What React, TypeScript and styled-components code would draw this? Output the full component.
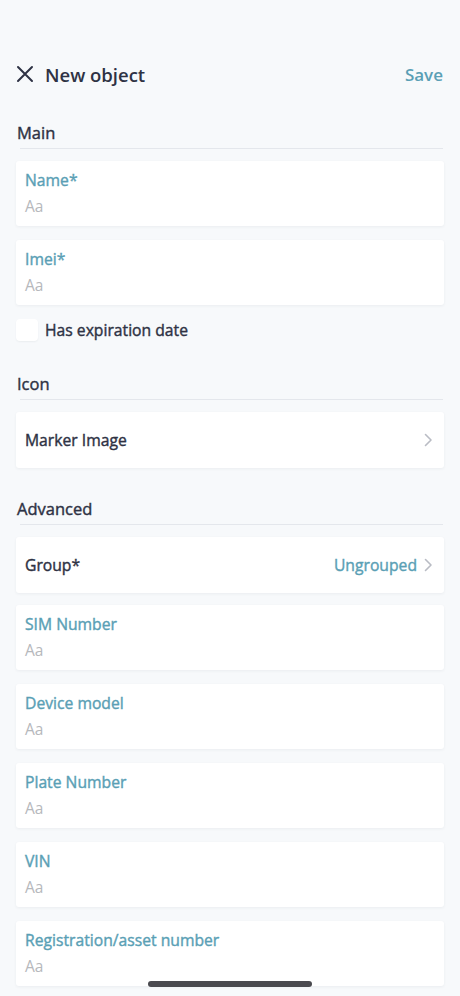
import React from "react";
import styled, { createGlobalStyle, css } from "styled-components";

const GlobalStyle = createGlobalStyle`
  html, body {
    margin: 0;
    padding: 0;
    background: #f7f9fb;
  }
  body {
    font-family: "Open Sans", "Noto Sans", sans-serif;
    -webkit-font-smoothing: antialiased;
  }
`;

const teal = "#5a9fb5";
const ink = "#2e3244";

// Open Sans has no medium face installed, so thicken the regular one a bit
const medium = css`
  font-weight: 400;
  -webkit-text-stroke: 0.4px currentColor;
`;

type Field = { label: string; required?: boolean };

const mainFields: Field[] = [
  { label: "Name", required: true },
  { label: "Imei", required: true },
];

const advancedFields: Field[] = [
  { label: "SIM Number" },
  { label: "Device model" },
  { label: "Plate Number" },
  { label: "VIN" },
  { label: "Registration/asset number" },
];

function Chevron() {
  return (
    <svg width="10" height="16" viewBox="0 0 10 16" fill="none">
      <path
        d="M2.5 2.5L8 8L2.5 13.5"
        stroke="#b9bcc4"
        strokeWidth="1.6"
        strokeLinecap="round"
        strokeLinejoin="round"
      />
    </svg>
  );
}

function CloseIcon() {
  return (
    <svg width="18" height="18" viewBox="0 0 18 18" fill="none">
      <path
        d="M2 2L16 16M16 2L2 16"
        stroke={ink}
        strokeWidth="2"
        strokeLinecap="round"
      />
    </svg>
  );
}

function InputCard({ label, required }: Field) {
  return (
    <Card>
      <FieldLabel>
        {label}
        {required ? "*" : ""}
      </FieldLabel>
      <Placeholder>Aa</Placeholder>
    </Card>
  );
}

export default function App() {
  return (
    <>
      <GlobalStyle />
      <Screen>
        <StatusSpace />
        <Header>
          <HeaderLeft>
            <CloseIcon />
            <Title>New object</Title>
          </HeaderLeft>
          <SaveButton>Save</SaveButton>
        </Header>

        <Section $top={18}>
          <SectionTitle>Main</SectionTitle>
          <Divider />
          <Stack>
            {mainFields.map((f) => (
              <InputCard key={f.label} {...f} />
            ))}
          </Stack>
          <CheckRow>
            <CheckBox />
            <CheckLabel>Has expiration date</CheckLabel>
          </CheckRow>
        </Section>

        <Section $top={32}>
          <SectionTitle>Icon</SectionTitle>
          <Divider />
          <RowCard>
            <RowLabel>Marker Image</RowLabel>
            <RowRight>
              <Chevron />
            </RowRight>
          </RowCard>
        </Section>

        <Section $top={30}>
          <SectionTitle>Advanced</SectionTitle>
          <Divider />
          <RowCard $spaced>
            <RowLabel>Group*</RowLabel>
            <RowRight>
              <RowValue>Ungrouped</RowValue>
              <Chevron />
            </RowRight>
          </RowCard>
          <Stack>
            {advancedFields.map((f) => (
              <InputCard key={f.label} {...f} />
            ))}
          </Stack>
        </Section>

        <HomeIndicator />
      </Screen>
    </>
  );
}

const Screen = styled.div`
  position: relative;
  width: 460px;
  height: 996px;
  overflow: hidden;
  padding: 0 16px;
  box-sizing: border-box;
  background: #f7f9fb;
`;

const StatusSpace = styled.div`
  height: 44px;
`;

const Header = styled.div`
  display: flex;
  align-items: center;
  justify-content: space-between;
  height: 60px;
`;

const HeaderLeft = styled.div`
  display: flex;
  align-items: center;
  gap: 11px;
`;

const Title = styled.div`
  font-size: 18.5px;
  font-weight: 600;
  color: ${ink};
`;

const SaveButton = styled.div`
  font-size: 17px;
  font-weight: 600;
  color: ${teal};
  margin-right: 1px;
`;

const Section = styled.div<{ $top: number }>`
  display: flex;
  flex-direction: column;
  padding-top: ${(p) => p.$top}px;
`;

const SectionTitle = styled.div`
  ${medium};
  font-size: 16.5px;
  line-height: 22px;
  color: ${ink};
  padding-left: 1px;
`;

const Divider = styled.div`
  height: 1px;
  margin: 4px 1px 12px 4px;
  background: #e4e7ec;
`;

const Stack = styled.div`
  display: flex;
  flex-direction: column;
  gap: 14px;
`;

const Card = styled.div`
  background: #ffffff;
  border-radius: 3px;
  box-shadow: 0 1px 3px rgba(40, 50, 70, 0.06);
  padding: 9px 9px 10px;
  display: flex;
  flex-direction: column;
  gap: 6px;
`;

const FieldLabel = styled.div`
  ${medium};
  font-size: 15.7px;
  line-height: 20px;
  color: ${teal};
`;

const Placeholder = styled.div`
  font-size: 15.5px;
  line-height: 20px;
  color: #b6b8bc;
`;

const RowCard = styled.div<{ $spaced?: boolean }>`
  height: 56px;
  margin-bottom: ${(p) => (p.$spaced ? "12px" : "0")};
  background: #ffffff;
  border-radius: 3px;
  box-shadow: 0 1px 3px rgba(40, 50, 70, 0.06);
  padding: 0 11px 0 9px;
  display: flex;
  align-items: center;
  justify-content: space-between;
`;

const RowLabel = styled.div`
  ${medium};
  font-size: 15.7px;
  color: ${ink};
`;

const RowRight = styled.div`
  display: flex;
  align-items: center;
  gap: 6px;
`;

const RowValue = styled.div`
  ${medium};
  font-size: 15.7px;
  color: ${teal};
`;

const CheckRow = styled.div`
  display: flex;
  align-items: center;
  gap: 7px;
  margin-top: 14px;
`;

const CheckBox = styled.div`
  width: 22px;
  height: 22px;
  border-radius: 4px;
  background: #ffffff;
  box-shadow: 0 1px 2px rgba(40, 50, 70, 0.06);
`;

const CheckLabel = styled.div`
  ${medium};
  font-size: 15.7px;
  color: ${ink};
`;

const HomeIndicator = styled.div`
  position: absolute;
  left: 148px;
  bottom: 9px;
  width: 164px;
  height: 6px;
  border-radius: 3px;
  background: #4a4a4f;
`;
